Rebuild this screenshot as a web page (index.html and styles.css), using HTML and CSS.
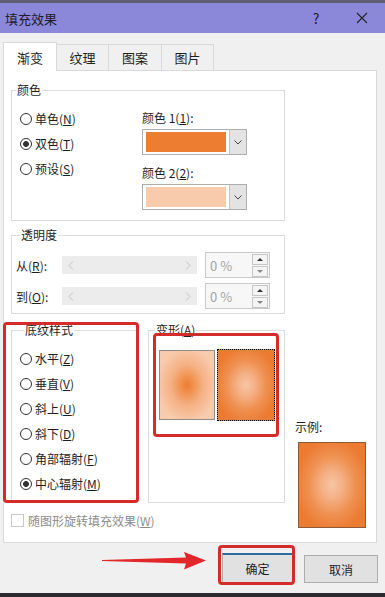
FILE: index.html
```html
<!DOCTYPE html>
<html lang="zh-CN">
<head>
  <meta charset="UTF-8">
  <title>填充效果</title>
  <link rel="stylesheet" href="styles.css">
</head>
<body>

<!-- 标题栏 -->
<div class="top-strip"></div>
<div class="titlebar">
  <span class="title">填充效果</span>
  <span class="title-help">?</span>
  <span class="title-close">
    <svg width="12" height="12" viewBox="0 0 12 12"><path d="M1 1 L11 11 M11 1 L1 11" stroke="#222" stroke-width="1.1" fill="none"/></svg>
  </span>
</div>

<!-- 选项卡 -->
<div class="tabs">
  <div class="tab active">渐变</div>
  <div class="tab">纹理</div>
  <div class="tab">图案</div>
  <div class="tab">图片</div>
</div>

<div class="panel">
  <div class="main-col">

    <div class="group group-color">
      <div class="group-title">颜色</div>
      <div class="color-body">
        <div class="radio-list">
          <div class="radio"><span class="dot"></span>单色(<u>N</u>)</div>
          <div class="radio"><span class="dot on"></span>双色(<u>T</u>)</div>
          <div class="radio"><span class="dot"></span>预设(<u>S</u>)</div>
        </div>
        <div class="color-pickers">
          <div class="field-label">颜色 1(<u>1</u>):</div>
          <div class="dropdown">
            <span class="swatch swatch-dark"></span>
            <span class="drop-btn"><svg width="8" height="5" viewBox="0 0 8 5"><path d="M0.5 0.5 L4 4 L7.5 0.5" stroke="#444" fill="none"/></svg></span>
          </div>
          <div class="field-label second">颜色 2(<u>2</u>):</div>
          <div class="dropdown">
            <span class="swatch swatch-light"></span>
            <span class="drop-btn"><svg width="8" height="5" viewBox="0 0 8 5"><path d="M0.5 0.5 L4 4 L7.5 0.5" stroke="#444" fill="none"/></svg></span>
          </div>
        </div>
      </div>
    </div>

    <div class="group group-alpha">
      <div class="group-title">透明度</div>
      <div class="alpha-row">
        <span class="alpha-label">从(<u>R</u>):</span>
        <div class="slider">
          <svg width="6" height="9" viewBox="0 0 6 9"><path d="M5 0.5 L1 4.5 L5 8.5" stroke="#c2c2c2" fill="none"/></svg>
          <svg width="6" height="9" viewBox="0 0 6 9"><path d="M1 0.5 L5 4.5 L1 8.5" stroke="#c2c2c2" fill="none"/></svg>
        </div>
        <div class="spinner">
          <span class="spin-value">0 %</span>
          <span class="spin-btns"><span class="spin-up"></span><span class="spin-down"></span></span>
        </div>
      </div>
      <div class="alpha-row">
        <span class="alpha-label">到(<u>O</u>):</span>
        <div class="slider">
          <svg width="6" height="9" viewBox="0 0 6 9"><path d="M5 0.5 L1 4.5 L5 8.5" stroke="#c2c2c2" fill="none"/></svg>
          <svg width="6" height="9" viewBox="0 0 6 9"><path d="M1 0.5 L5 4.5 L1 8.5" stroke="#c2c2c2" fill="none"/></svg>
        </div>
        <div class="spinner">
          <span class="spin-value">0 %</span>
          <span class="spin-btns"><span class="spin-up"></span><span class="spin-down"></span></span>
        </div>
      </div>
    </div>

    <div class="group-row">
      <div class="group group-style">
        <div class="group-title">底纹样式</div>
        <div class="radio-list">
          <div class="radio"><span class="dot"></span>水平(<u>Z</u>)</div>
          <div class="radio"><span class="dot"></span>垂直(<u>V</u>)</div>
          <div class="radio"><span class="dot"></span>斜上(<u>U</u>)</div>
          <div class="radio"><span class="dot"></span>斜下(<u>D</u>)</div>
          <div class="radio"><span class="dot"></span>角部辐射(<u>F</u>)</div>
          <div class="radio"><span class="dot on"></span>中心辐射(<u>M</u>)</div>
        </div>
      </div>
      <div class="group group-variant">
        <div class="group-title">变形(<u>A</u>)</div>
        <div class="variants">
          <div class="variant variant-in"></div>
          <div class="variant variant-out selected"></div>
        </div>
      </div>
    </div>

    <div class="check-row"><span class="checkbox"></span>随图形旋转填充效果(<u>W</u>)</div>
  </div>

  <div class="side-col">
    <div class="sample-label">示例:</div>
    <div class="sample"></div>
  </div>
</div>

<div class="buttons">
  <button class="btn btn-ok">确定</button>
  <button class="btn">取消</button>
</div>
<div class="bottom-strip"></div>

<!-- 标注 -->
<div class="mark mark-style"></div>
<div class="mark mark-variant"></div>
<div class="mark mark-ok"></div>
<svg class="arrow" width="110" height="22" viewBox="0 0 110 22">
  <polygon points="2,10 86,7.5 84,2 106,10.5 84,19.5 86,13.5 2,11" fill="#e3262a"/>
</svg>

</body>
</html>
```

FILE: styles.css
```css
/* 基础 */
* {
  box-sizing: border-box;
}
body {
  margin: 0;
  width: 385px;
  height: 597px;
  overflow: hidden;
  background: #f0f0f0;
  font-family: "Noto Sans CJK SC", "Noto Sans", sans-serif;
  font-size: 12px;
  color: #1e1e1e;
}
u {
  text-underline-offset: 1px;
}

/* 标题栏 */
.top-strip {
  height: 3px;
  background: #5f5d72;
}
.titlebar {
  height: 30px;
  background: #8b88d9;
  display: flex;
  align-items: center;
  font-size: 13px;
  color: #1c1c2a;
}
.title {
  padding-left: 5px;
  flex: 1;
}
.title-help {
  width: 20px;
  text-align: center;
  margin-right: 26px;
  font-size: 14px;
}
.title-close {
  width: 20px;
  display: flex;
  justify-content: center;
  margin-right: 13px;
}

/* 选项卡 */
.tabs {
  display: flex;
  align-items: flex-end;
  height: 28px;
  margin-top: 9px;
  padding-left: 3px;
  font-size: 13px;
}
.tab {
  height: 26px;
  line-height: 25px;
  text-align: center;
  border: 1px solid #d9d9d9;
  border-bottom: none;
  margin-left: -1px;
  width: 54px;
}
.tab:nth-child(2),
.tab:nth-child(4) {
  width: 53px;
}
.tab.active {
  height: 29px;
  line-height: 29px;
  margin-bottom: -1px;
  margin-left: 0;
  background: #fff;
  position: relative;
  z-index: 1;
}

/* 主面板 */
.panel {
  margin-left: 3px;
  width: 374px;
  height: 473px;
  background: #fff;
  border: 1px solid #d9d9d9;
  padding: 19px 0 0 7px;
  display: flex;
}
.main-col {
  width: 274px;
}
.group {
  border: 1px solid #dcdcdc;
}
.group-title {
  width: fit-content;
  margin: -9px 0 0 4px;
  padding: 0 1px;
  background: #fff;
  line-height: 16px;
}

/* 单选按钮 */
.radio-list {
  display: flex;
  flex-direction: column;
}
.radio {
  display: flex;
  align-items: center;
  height: 25px;
}
.dot {
  width: 12px;
  height: 12px;
  border: 1px solid #333;
  border-radius: 50%;
  margin-right: 3px;
  background: #fff;
}
.dot.on {
  background: radial-gradient(circle, #333 0 2.6px, #fff 3.2px);
}

/* 颜色 */
.color-body {
  display: flex;
  padding: 8px 0 10px 8px;
}
.color-body .radio-list {
  width: 122px;
}
.color-pickers {
  padding-top: 4px;
}
.field-label {
  line-height: 16px;
}
.field-label.second {
  margin-top: 10px;
}
.dropdown {
  margin-top: 3px;
  width: 105px;
  height: 26px;
  border: 1px solid #adadad;
  background: #fff;
  display: flex;
  padding: 2px 0 2px 3px;
}
.swatch {
  flex: 1;
  margin-right: 3px;
}
.swatch-dark {
  background: #ed7d31;
}
.swatch-light {
  background: #f8cbad;
}
.drop-btn {
  width: 17px;
  margin: -2px 0;
  background: #e3e3e3;
  border-left: 1px solid #c4c4c4;
  display: flex;
  align-items: center;
  justify-content: center;
}

/* 透明度 */
.group-alpha {
  margin-top: 14px;
  padding: 9px 0 4px 4px;
}
.group-alpha .group-title {
  margin-top: -18px;
  margin-bottom: 9px;
}
.alpha-row {
  display: flex;
  align-items: center;
  height: 26px;
}
.alpha-row + .alpha-row {
  margin-top: 5px;
}
.alpha-label {
  width: 46px;
}
.slider {
  width: 135px;
  height: 18px;
  background: #ececec;
  display: flex;
  align-items: center;
  justify-content: space-between;
  padding: 0 6px;
}
.spinner {
  margin-left: 8px;
  width: 65px;
  height: 26px;
  border: 1px solid #c9c9c9;
  background: #f7f7f7;
  display: flex;
  align-items: center;
  padding-left: 4px;
}
.spin-value {
  flex: 1;
  color: #a3a3a3;
  font-size: 13px;
}
.spin-btns {
  width: 16px;
  margin-right: 1px;
  display: flex;
  flex-direction: column;
  gap: 1px;
}
.spin-up,
.spin-down {
  height: 11px;
  border: 1px solid #c6c6c6;
  background: #f4f4f4;
  position: relative;
}
.spin-up::after,
.spin-down::after {
  content: "";
  position: absolute;
  left: 4px;
  top: 3px;
  border-left: 3px solid transparent;
  border-right: 3px solid transparent;
}
.spin-up::after {
  border-bottom: 3px solid #333;
}
.spin-down::after {
  border-top: 3px solid #888;
}

/* 底纹样式 / 变形 */
.group-row {
  display: flex;
  margin-top: 16px;
}
.group-style {
  width: 126px;
  padding: 8px 0 6px 8px;
}
.group-style .group-title {
  margin-top: -17px;
  margin-bottom: 8px;
}
.group-variant {
  width: 137px;
  margin-left: 11px;
  padding-left: 10px;
}
.group-variant .group-title {
  margin-left: -4px;
}
.variants {
  display: flex;
  align-items: flex-start;
  margin-top: 11px;
}
.variant {
  width: 56px;
  height: 70px;
  border: 1px solid #8c8c8c;
  margin-top: 1px;
}
.variant-in {
  background: radial-gradient(ellipse 55% 55% at center, #ed7d31 0%, #f0904c 20%, #f5b185 55%, #f8cbad 100%);
}
.variant-out {
  background: radial-gradient(ellipse 55% 55% at center, #f7c6a5 0%, #f4b085 30%, #ef9050 65%, #ec7b32 100%);
}
.variant.selected {
  width: 58px;
  height: 72px;
  margin-top: 0;
  margin-left: 2px;
  border: 1px dotted #000;
}

.check-row {
  display: flex;
  align-items: center;
  height: 16px;
  margin-top: 9px;
  color: #8c8c8c;
}
.checkbox {
  width: 13px;
  height: 13px;
  border: 1px solid #c8c8c8;
  margin-right: 4px;
}

/* 示例 */
.side-col {
  margin-left: 10px;
  padding-top: 329px;
}
.sample-label {
  line-height: 16px;
}
.sample {
  margin: 7px 0 0 3px;
  width: 68px;
  height: 86px;
  border: 1px solid #8d5a38;
  background: radial-gradient(ellipse 55% 55% at center, #f7c6a5 0%, #f4b085 30%, #ef9050 65%, #ec7b32 100%);
}

/* 按钮 */
.buttons {
  display: flex;
  justify-content: flex-end;
  align-items: flex-end;
  gap: 11px;
  margin: 10px 7px 0 0;
}
.btn {
  font: inherit;
  font-size: 12px;
  color: #1e1e1e;
  background: #e1e1e1;
  border: 1px solid #adadad;
  width: 74px;
  height: 28px;
  padding: 0;
}
.btn-ok {
  width: 71px;
  height: 30px;
  border-top: 2px solid #2f6c9f;
}
.bottom-strip {
  margin-top: 10px;
  height: 4px;
  background: #2c2a2e;
}

/* 标注 */
.mark {
  position: absolute;
  border: 3px solid #d52b2b;
  border-radius: 4px;
}
.mark-style {
  left: 3px;
  top: 322px;
  width: 136px;
  height: 181px;
}
.mark-variant {
  left: 153px;
  top: 333px;
  width: 126px;
  height: 104px;
}
.mark-ok {
  left: 218px;
  top: 545px;
  width: 77px;
  height: 40px;
}
.arrow {
  position: absolute;
  left: 100px;
  top: 550px;
}
```
